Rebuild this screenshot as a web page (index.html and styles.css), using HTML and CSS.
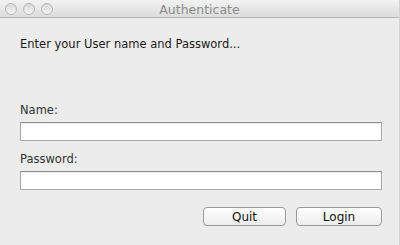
FILE: index.html
```html
<!DOCTYPE html>
<html lang="en">
<head>
    <meta charset="UTF-8">
    <title>Authenticate</title>
    <link rel="stylesheet" href="styles.css">
</head>
<body>
    <div class="window">
        <div class="titlebar">
            <div class="lights">
                <span class="light"></span>
                <span class="light"></span>
                <span class="light"></span>
            </div>
            <div class="title">Authenticate</div>
        </div>
        <div class="content">
            <p class="prompt">Enter your User name and Password...</p>
            <form class="login-form">
                <div class="form-group">
                    <label for="name">Name:</label>
                    <input type="text" id="name">
                </div>
                <div class="form-group">
                    <label for="password">Password:</label>
                    <input type="password" id="password">
                </div>
                <div class="buttons">
                    <button type="button">Quit</button>
                    <button type="submit">Login</button>
                </div>
            </form>
        </div>
    </div>
</body>
</html>
```

FILE: styles.css
```css
* {
    box-sizing: border-box;
}
body {
    margin: 0;
    background: #ececec;
    font-family: "DejaVu Sans", "Liberation Sans", sans-serif;
    font-size: 11.5px;
    color: #1a1a1a;
}
.window {
    width: 400px;
    height: 245px;
    border-right: 1px solid #d4d4d4;
}
.titlebar {
    position: relative;
    height: 18px;
    background: linear-gradient(#f2f2f2, #dcdcdc);
    border-bottom: 1px solid #b4b4b4;
}
.lights {
    display: flex;
    gap: 6px;
    padding: 3px 0 0 5px;
}
.light {
    width: 12px;
    height: 12px;
    border-radius: 50%;
    border: 1px solid #b8b8b8;
    background: linear-gradient(#d8d8d8, #f4f4f4);
}
.title {
    position: absolute;
    left: 0;
    right: 0;
    top: 2px;
    text-align: center;
    color: #8c8c8c;
    font-size: 12.5px;
}
.content {
    padding: 0 17px 0 20px;
}
.prompt {
    margin: 19px 0 0;
    line-height: 14px;
}
.login-form {
    margin-top: 52px;
}
.form-group {
    margin-bottom: 11px;
}
.form-group label {
    display: block;
    line-height: 14px;
    margin-bottom: 5px;
    color: #333;
}
.form-group input {
    display: block;
    width: 100%;
    height: 19px;
    margin: 0;
    border: 1px solid #a8a8a8;
    border-top-color: #8e8e8e;
    background: #fff;
    box-shadow: inset 0 1px 1px rgba(0, 0, 0, 0.08);
}
.buttons {
    display: flex;
    justify-content: flex-end;
    gap: 10px;
    margin-top: 17px;
}
.buttons button {
    width: 83px;
    height: 19px;
    padding: 0;
    border: 1px solid #9a9a9a;
    border-radius: 4px;
    background: linear-gradient(#ffffff, #ececec);
    font-family: inherit;
    font-size: 12px;
    color: #111;
}
.buttons button:last-child {
    width: 86px;
}
```
